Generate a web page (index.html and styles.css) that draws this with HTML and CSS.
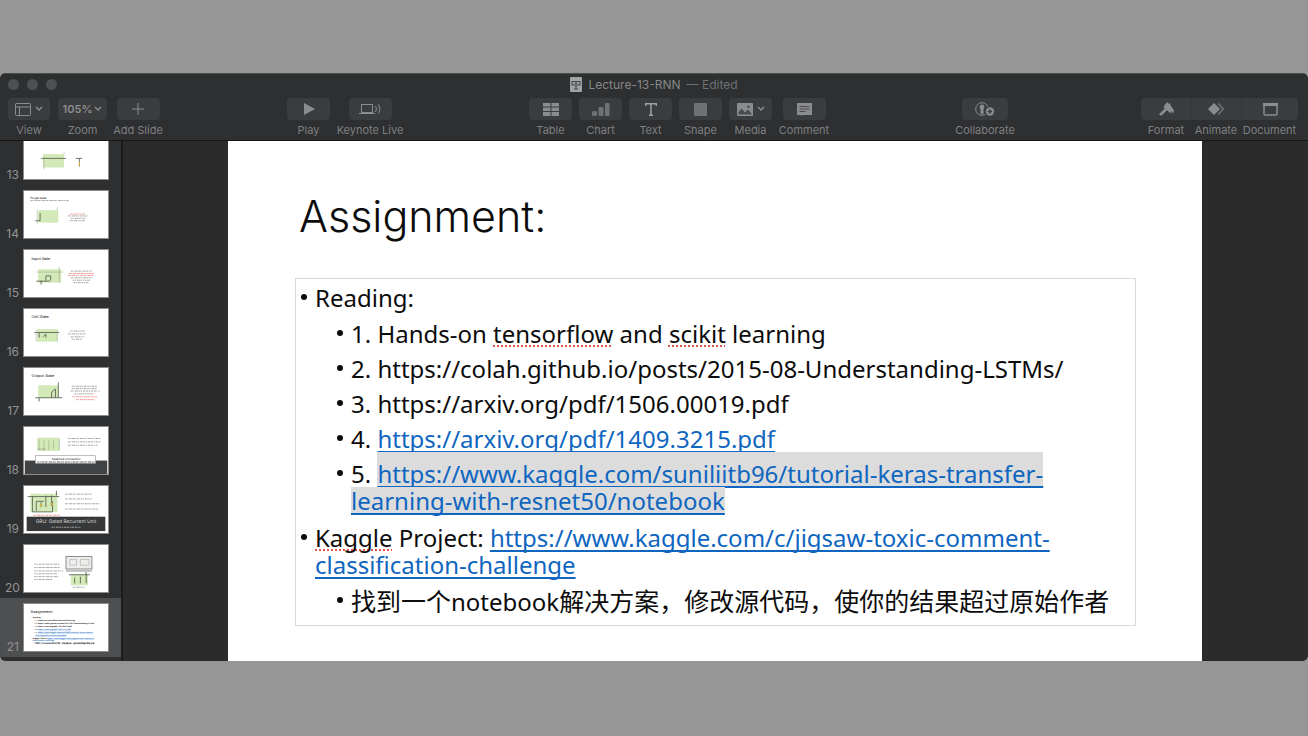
FILE: index.html
```
<!DOCTYPE html>
<html lang="en">
<head>
<meta charset="utf-8">
<title>Lecture-13-RNN</title>
<link rel="stylesheet" href="styles.css">
</head>
<body>
<main class="window">
  <header class="chrome">
    <div class="titlebar">
      <div class="lights"><span class="light"></span><span class="light"></span><span class="light"></span></div>
      <div class="doc-title">
        <svg class="doc-icon" width="12" height="15" viewBox="0 0 12 15"><rect width="12" height="15" rx="1" fill="#a2a3a4"/><path d="M2 4.500h8v3.500H2zM4.500 6.200h3M6 8v3.500M4 12h4" fill="none" stroke="#4b4c4e" stroke-width="1.200"/></svg>
        <span>Lecture-13-RNN</span><span class="edited">— Edited</span>
      </div>
    </div>
    <nav class="toolbar">
      <div class="group group-left">
        <button class="tool tool-view"><span class="face"><svg width="16" height="13" viewBox="0 0 16 13" fill="none" stroke="currentColor"><rect x=".5" y=".5" width="15" height="12" rx="1"/><path d="M.5 4H15.500M4.500 4V12.500"/></svg><svg class="chev" width="8" height="6" viewBox="0 0 8 6"><path d="M1 1l3 3 3-3"/></svg></span><span class="caption">View</span></button>
        <button class="tool tool-zoom"><span class="face"><span class="percent">105%</span><svg class="chev" width="8" height="6" viewBox="0 0 8 6"><path d="M1 1l3 3 3-3"/></svg></span><span class="caption">Zoom</span></button>
        <button class="tool tool-add"><span class="face"><svg width="12" height="12" viewBox="0 0 12 12" stroke="currentColor"><path d="M6 0v12M0 6h12"/></svg></span><span class="caption">Add Slide</span></button>
      </div>
      <div class="group">
        <button class="tool"><span class="face"><svg width="12" height="12" viewBox="0 0 12 12" fill="currentColor"><path d="M1 0l11 6-11 6z"/></svg></span><span class="caption">Play</span></button>
        <button class="tool tool-live"><span class="face"><svg width="22" height="12" viewBox="0 0 22 12" fill="none" stroke="currentColor"><rect x="2.500" y="1.500" width="11" height="8"/><path d="M0 10.500h16"/><path d="M16.500 3q2 3 0 6M19.500 1.500q3 4.500 0 9"/></svg></span><span class="caption">Keynote Live</span></button>
      </div>
      <div class="group">
        <button class="tool"><span class="face"><svg width="16" height="13" viewBox="0 0 16 13" fill="currentColor"><path d="M0 0h7.500v3.500H0zM8.500 0H16v3.500H8.500zM0 4.500h7.500v3.500H0zM8.500 4.500H16v3.500H8.500zM0 9h7.500v4H0zM8.500 9H16v4H8.500z"/></svg></span><span class="caption">Table</span></button>
        <button class="tool"><span class="face dim"><svg width="18" height="13" viewBox="0 0 18 13" fill="currentColor"><rect y="8" width="5" height="5" rx="1.500"/><rect x="6.500" y="4" width="5" height="9" rx="1"/><rect x="13" width="4.500" height="13" rx="1"/></svg></span><span class="caption">Chart</span></button>
        <button class="tool"><span class="face bright"><svg width="12" height="13" viewBox="0 0 12 13" fill="none" stroke="currentColor" stroke-width="1.500"><path d="M.7 3V.8h10.600V3M6 .8V12.500M4 12.300h4"/></svg></span><span class="caption">Text</span></button>
        <button class="tool"><span class="face dim"><svg width="13" height="13" viewBox="0 0 13 13"><rect width="13" height="13" rx="1" fill="currentColor"/></svg></span><span class="caption">Shape</span></button>
        <button class="tool"><span class="face"><svg width="16" height="13" viewBox="0 0 16 13"><rect width="16" height="13" rx="1" fill="currentColor"/><path d="M1.500 9.500l3-4 3.500 4 3-3 3.500 4v1h-13z" fill="#4a4b4d"/><circle cx="11.500" cy="3.700" r="1.300" fill="#4a4b4d"/></svg><svg class="chev" width="8" height="6" viewBox="0 0 8 6"><path d="M1 1l3 3 3-3"/></svg></span><span class="caption">Media</span></button>
        <button class="tool tool-comment"><span class="face"><svg width="15" height="13" viewBox="0 0 15 13"><path d="M0 0h15v12H6l-2 1v-1H0z" fill="currentColor"/><path d="M2.500 3.500h10M2.500 6h10M2.500 8.500h6" stroke="#4a4b4d"/></svg></span><span class="caption">Comment</span></button>
      </div>
      <div class="group">
        <button class="tool tool-collab"><span class="face"><svg width="20" height="15" viewBox="0 0 20 15"><circle cx="7" cy="7" r="6.300" fill="none" stroke="currentColor"/><path d="M7 2.500a2.300 2.500 0 0 1 1.500 4.500V12H5.500V7A2.300 2.500 0 0 1 7 2.500z" fill="currentColor"/><circle cx="15" cy="9.500" r="5" fill="#3a3b3d"/><circle cx="15" cy="9.500" r="4.200" fill="currentColor"/><path d="M15 7.300v4.400M12.800 9.500h4.400" stroke="#3a3b3d" stroke-width="1.300"/></svg></span><span class="caption">Collaborate</span></button>
      </div>
      <div class="group group-right">
        <button class="tool tool-format"><span class="face"><svg width="15" height="14" viewBox="0 0 15 14" fill="currentColor"><path d="M6 2.500L8.500 0l1 2L11 .8l.7 2.700 3.300 5-1 3-2-2.500-.5 2.500L8 8.200 3 13.200l-2 .3-.8-1.500L5.800 6.500 4.500 5z"/></svg></span><span class="caption">Format</span></button>
        <button class="tool tool-animate"><span class="face"><svg width="17" height="12" viewBox="0 0 17 12"><path d="M6 0l6 6-6 6-6-6z" fill="currentColor"/><path d="M9.500 1L11 0l5.500 6L11 12l-1.500-1L14 6z" fill="currentColor" opacity=".6"/></svg></span><span class="caption">Animate</span></button>
        <button class="tool tool-document"><span class="face"><svg width="15" height="13" viewBox="0 0 15 13"><rect x="1" y="1" width="13" height="11" rx="1" fill="none" stroke="currentColor" stroke-width="1.500"/><path d="M0 1.500h15" stroke="currentColor" stroke-width="3"/></svg></span><span class="caption">Document</span></button>
      </div>
    </nav>
  </header>

  <div class="workspace">
    <aside class="slides">
      <button class="slide-row"><span class="num">13</span>
        <svg class="thumb" viewBox="0 0 86 49"><rect x="19" y="23" width="22" height="14" class="cell"/><path d="M17 27.500H43M53 27.500H60M57 27.500V36" class="wire"/><path d="M20 26V39M41 23V21" class="thin"/><path d="M57 31v4" stroke="#dba63b"/></svg></button>
      <button class="slide-row"><span class="num">14</span>
        <svg class="thumb" viewBox="0 0 86 49"><text x="6" y="8" class="t3">Forget Gate</text><path d="M6 10H46" class="lines"/><rect x="14" y="20" width="21" height="13" class="cell"/><path d="M16 23V31H11" class="wire"/><path d="M13 20V34M34 20V17" class="thin"/><path d="M47 24H63" class="lines red"/><path d="M45 26H66M48 28.500H63M47 31H63" class="lines"/></svg></button>
      <button class="slide-row"><span class="num">15</span>
        <svg class="thumb" viewBox="0 0 86 49"><text x="7" y="10" class="t4">Input Gate</text><rect x="14" y="20" width="24" height="14" class="cell"/><path d="M12 32.500H26M17 32V36M22 32V27H27V32" class="wire"/><path d="M12 23H40M36 18V34" class="thin"/><path d="M48 22H70M48 29H70M50 31.500H68M51 34H67" class="lines"/><path d="M46 24.500H72M45 26.500H72" class="lines red"/></svg></button>
      <button class="slide-row"><span class="num">16</span>
        <svg class="thumb" viewBox="0 0 86 49"><text x="7" y="9" class="t4">Cell State</text><rect x="13" y="21" width="21" height="13" class="cell"/><path d="M10 24.500H36M15 25v5M19 29l3-3v4" class="wire"/><path d="M12 22V34M34 22V34" class="thin"/><path d="M47 23H63M45 26H64M48 29H62M49 31.500H60" class="lines"/></svg></button>
      <button class="slide-row"><span class="num">17</span>
        <svg class="thumb" viewBox="0 0 86 49"><text x="7" y="9" class="t4">Output State</text><rect x="14" y="18" width="21" height="13" class="cell"/><path d="M11 31H39M28 31V25L32 22V31M35 31V15M15 31v4" class="wire"/><path d="M49 19H76M49 21.500H75M48 24H78M52 27H73" class="lines"/><path d="M49 30H76M53 33H73" class="lines red"/></svg></button>
      <button class="slide-row"><span class="num">18</span>
        <svg class="thumb" viewBox="0 0 86 49"><rect y="35" width="86" height="14" fill="#414244"/><rect x="13" y="11" width="23" height="14" class="cell"/><path d="M15 13V24M20 25V14M25 14V24M30 23V14" class="thin"/><path d="M13 23H22M36 12v12" class="wire faint"/><path d="M45 12H79M45 15.500H79M45 19H76" class="lines"/><rect x="11" y="30" width="63" height="8" fill="#fff" stroke="#777" stroke-width=".5"/><text x="43" y="34" class="t3 mid">Peephole connection</text><path d="M13 36.500H73" class="lines dark"/></svg></button>
      <button class="slide-row"><span class="num">19</span>
        <svg class="thumb" viewBox="0 0 86 49"><rect x="6" y="8" width="28" height="19" class="cell"/><path d="M3 11H36M8 11V27H29V16M12 26V16H20M17 17v5M22 10v12M28 10v11M33 10V5" class="wire"/><circle cx="17" cy="20" r="1.500" fill="#c9b45a"/><circle cx="28" cy="19" r="1.500" fill="#c9b45a"/><path d="M9 30.500H37" class="lines red"/><path d="M42 8.500H70M42 13.500H70M42 18.500H78M42 24H77" class="lines"/><rect x="2" y="32" width="82" height="15" fill="#373839"/><text x="43" y="39" class="t5 mid white">GRU: Gated Recurrent Unit</text><path d="M28 43H58" class="lines"/></svg></button>
      <button class="slide-row"><span class="num">20</span>
        <svg class="thumb" viewBox="0 0 86 49"><path d="M10 20H36M10 23.500H37M10 27H40M10 30H34M10 33H35M10 36H29" class="lines"/><rect x="43" y="12" width="27" height="13" fill="#eee" stroke="#888"/><path d="M47 15h7v6H47zM58 15h9v6H58z" class="thin"/><path d="M43 27H70" stroke="#bbb" stroke-width="2"/><rect x="48" y="31" width="18" height="11" class="cell"/><path d="M46 31H68M52 34V40M58 33V40M64 28V40" class="wire"/><path d="M50 44H63" class="lines"/></svg></button>
      <button class="slide-row selected"><span class="num">21</span>
        <svg class="thumb" viewBox="0 0 86 49"><text x="6" y="9" class="t4">Assignment:</text><g class="t2"><text x="7" y="15">• Reading:</text><text x="10" y="18">• 1. Hands-on tensorflow and scikit learning</text><text x="10" y="21">• 2. https://colah.github.io/posts/2015-08-Understanding-LSTMs/</text><text x="10" y="24">• 3. https://arxiv.org/pdf/1506.00019.pdf</text><text x="10" y="27">• 4. <tspan class="url">https://arxiv.org/pdf/1409.3215.pdf</tspan></text><text x="10" y="30">• 5. <tspan class="url">https://www.kaggle.com/suniliitb96/tutorial-keras-transfer-</tspan></text><text x="11" y="33" class="url">learning-with-resnet50/notebook</text><text x="7" y="36">• Kaggle Project: <tspan class="url">https://www.kaggle.com/c/jigsaw-toxic-comment-</tspan></text><text x="8" y="39" class="url">classification-challenge</text><text x="10" y="42">• 找到一个notebook解决方案，修改源代码，使你的结果超过原始作者</text></g></svg></button>
    </aside>

    <section class="canvas">
      <article class="slide">
        <h1 class="heading">Assignment:</h1>
        <div class="textbox">
          <ul class="bullets">
            <li><div>Reading:
              <ul class="bullets sub">
                <li><div>1. Hands-on <span class="typo">tensorflow</span> and <span class="typo">scikit</span> learning</div></li>
                <li><div>2. https://colah.github.io/posts/2015-08-Understanding-LSTMs/</div></li>
                <li><div>3. https://arxiv.org/pdf/1506.00019.pdf</div></li>
                <li><div>4. <a href="https://arxiv.org/pdf/1409.3215.pdf">https://arxiv.org/pdf/1409.3215.pdf</a></div></li>
                <li><div>5. <a href="https://www.kaggle.com/suniliitb96/tutorial-keras-transfer-learning-with-resnet50/notebook"><span class="marked first">https://www.kaggle.com/suniliitb96/tutorial-keras-transfer-</span><br><span class="marked">learning-with-resnet50/notebook</span></a></div></li>
              </ul></div>
            </li>
            <li><div><span class="typo">Kaggle</span> Project: <a href="https://www.kaggle.com/c/jigsaw-toxic-comment-classification-challenge">https://www.kaggle.com/c/jigsaw-toxic-comment-<br>classification-challenge</a>
              <ul class="bullets sub">
                <li><div lang="zh-CN" class="zh">找到一个<span class="latin">notebook</span>解决方案，修改源代码，使你的结果超过原始作者</div></li>
              </ul></div>
            </li>
          </ul>
        </div>
      </article>
    </section>
  </div>
</main>
</body>
</html>
```
FILE: styles.css
```
* { box-sizing: border-box; }

body {
  margin: 0;
  height: 100vh;
  padding: 73px 0 75px;
  background: #969696;
  font-family: Inter, "Liberation Sans", sans-serif;
}

.window {
  display: flex;
  flex-direction: column;
  height: 100%;
  overflow: hidden;
  border-radius: 6px;
  background: #2b2b2b;
}

.chrome {
  padding-bottom: 3px;
  background: #2e2f31;
  border-top: 1px solid #4c504e;
  border-bottom: 1px solid #161616;
  color: #7e7f81;
}

.titlebar {
  display: grid;
  grid-template-columns: 1fr auto 1fr;
  align-items: center;
  height: 20px;
}

.lights { display: flex; gap: 8px; padding-left: 8px; }
.light { width: 11px; height: 11px; border-radius: 50%; background: #4d4f51; }

.doc-title { display: flex; align-items: center; gap: 6px; font-size: 12px; color: #858688; }
.edited { color: #707173; }

.toolbar {
  display: flex;
  justify-content: space-between;
  padding: 4px 10px 0 8px;
}

.group { display: flex; gap: 7px; }
.group-left { gap: 8px; }
.group-right { gap: 0; }

.tool {
  display: flex;
  flex-direction: column;
  align-items: center;
  gap: 3px;
  width: 43px;
  padding: 0;
  border: 0;
  background: none;
  color: inherit;
  font: inherit;
}

.face {
  display: flex;
  align-items: center;
  justify-content: center;
  gap: 4px;
  width: 43px;
  height: 22px;
  border-radius: 4px;
  background: #3b3c3e;
  color: #8b8c8e;
}
.face.dim { color: #707173; }
.face.bright { color: #a0a1a2; }
.caption { font-size: 11px; line-height: 14px; white-space: nowrap; }
.percent { font-size: 11px; font-weight: 600; }
.chev { fill: none; stroke: currentColor; stroke-width: 1.5; }

.tool-view, .tool-view .face { width: 42px; }
.tool-zoom, .tool-zoom .face { width: 49px; }
.tool-zoom .face { gap: 2px; }
.tool-add { width: 46px; }
.tool-live { width: 66px; }
.tool-comment { width: 50px; }
.tool-collab { width: 60px; }
.tool-collab .face { width: 46px; }
.tool-format, .tool-animate { width: 50px; }
.tool-document { width: 57px; }
.group-right .face { width: 100%; border-radius: 0; }
.group-right .tool + .tool .face { border-left: 1px solid #363739; }
.group-right .tool:first-child .face { border-radius: 4px 0 0 4px; }
.group-right .tool:last-child .face { border-radius: 0 4px 4px 0; }

.workspace { display: flex; flex: 1; min-height: 0; }

.slides {
  display: flex;
  flex-direction: column;
  justify-content: flex-end;
  width: 123px;
  padding-bottom: 4px;
  overflow: hidden;
  background: #2e2f31;
  border-right: 2px solid #1c1c1d;
}

.slide-row {
  display: flex;
  flex: none;
  align-items: flex-end;
  gap: 4px;
  height: 59px;
  padding: 5px 0 5px 5px;
  border: 0;
  background: none;
  color: #939495;
  font: inherit;
}
.slide-row.selected { background: #4e4f51; }
.num { width: 14px; font-size: 12px; line-height: 10px; text-align: right; }
.thumb { width: 86px; height: 49px; background: #fff; border: 1px solid #8c8c8c; text-rendering: geometricPrecision; }

.cell { fill: #d3e9b8; }
.wire { fill: none; stroke: #4a5044; stroke-width: 0.8; }
.faint { opacity: 0.4; }
.thin { fill: none; stroke: #8a9a7c; stroke-width: 0.5; }
.lines { stroke: #a2a2a2; stroke-width: 1; stroke-dasharray: 2 0.6 1 0.8 3 0.7; }
.lines.red { stroke: #f0948d; }
.lines.dark { stroke: #555; }
.t2 { font-family: "Noto Sans", "Noto Sans CJK SC", sans-serif; font-size: 2px; font-weight: 600; }
.t3 { font-size: 3px; }
.t4 { font-size: 4px; }
.t5 { font-size: 5px; }
.mid { text-anchor: middle; }
.white { fill: #ddd; }
.url { fill: #1565c0; text-decoration: underline; }

.canvas { display: flex; flex: 1; padding: 0 106px 0 105px; background: #2b2b2b; }

.slide {
  flex: 1;
  padding: 47px 66px 0 67px;
  background: #fff;
  color: #0c0c0c;
}

.heading {
  margin: 0 0 34px;
  padding-left: 4px;
  font-size: 43px;
  font-weight: 300;
  line-height: 56px;
}

.textbox {
  padding: 5px 4px 10px;
  border: 1px solid #d8d8d8;
  font-family: "Noto Sans", "Noto Sans CJK SC", sans-serif;
  font-size: 24px;
  line-height: 27px;
  white-space: nowrap;
}

.bullets { margin: 0; padding: 0; list-style: none; }
.bullets > li { display: grid; grid-template-columns: 15px 1fr; }
.bullets > li::before {
  content: "";
  width: 6px;
  height: 6px;
  margin: 10px 0 0 1px;
  border-radius: 50%;
  background: #0c0c0c;
}
.bullets > li + li { margin-top: 10px; }
.bullets.sub { margin-top: 9px; padding-left: 21px; }
.bullets.sub > li + li { margin-top: 8px; }

.textbox a, .marked {
  color: #0f66c0;
  text-decoration: underline 2px;
  text-underline-offset: 3px;
  text-decoration-skip-ink: none;
}
.marked { display: inline-block; background: #dcdcdc; }
.marked.first { margin-top: -8px; padding-top: 8px; }
.typo {
  text-decoration: underline dotted #e0564c 2px;
  text-underline-offset: 2px;
  text-decoration-skip-ink: none;
}
.zh { font-family: "Noto Sans CJK SC", sans-serif; font-size: 25px; }
.latin { font-family: "Noto Sans", sans-serif; font-size: 24px; }
```
